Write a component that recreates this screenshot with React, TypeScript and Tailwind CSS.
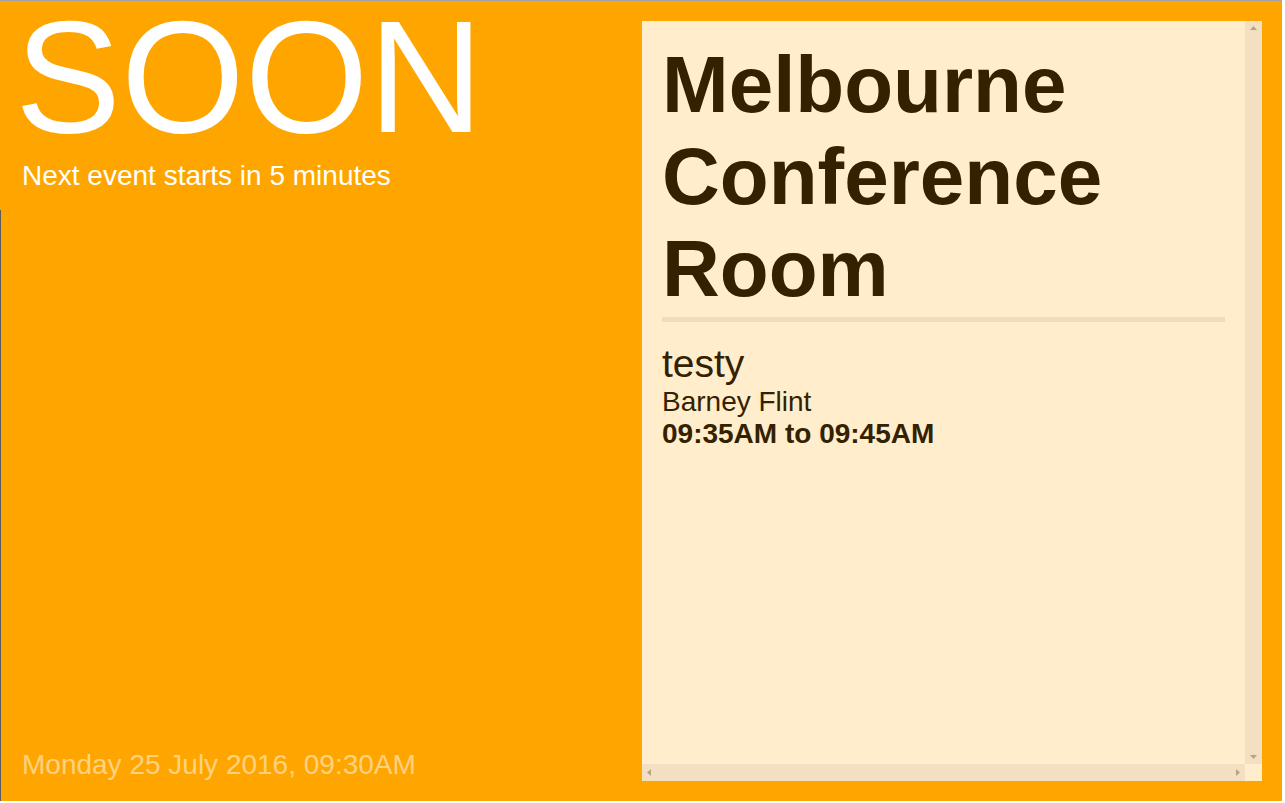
import React from "react";

const font = { fontFamily: '"Liberation Sans", Arial, sans-serif' };

export default function App() {
  return (
    <div className="w-[1285px] h-[803px] bg-white overflow-hidden" style={font}>
      <div className="relative w-[1282px] h-[801px] bg-[#ffa500] border-t border-[#a3a3a3] flex">
        <div className="absolute left-0 top-[209px] bottom-0 w-px bg-[#5b5b5b]" />
        {/* Left column */}
        <div className="w-[642px] h-full flex flex-col pl-[22px] pb-[20px]">
          <div className="text-[159px] leading-[152px] text-white -ml-[7px]">SOON</div>
          <div className="text-[28px] leading-[32px] text-white mt-[7px]">Next event starts in 5 minutes</div>
          <div className="mt-auto text-[28px] leading-[32px] text-[#ffd280]">Monday 25 July 2016, 09:30AM</div>
        </div>
        {/* Right panel */}
        <div className="mt-5 mb-5 w-[620px] h-[760px] bg-[#ffedcc] flex flex-col">
          <div className="flex flex-1 min-h-0">
            <div className="flex-1 px-5 pt-[18px] text-[#332100]">
              <h1 className="text-[80px] leading-[92px] font-bold">Melbourne Conference Room</h1>
              <div className="h-[5px] bg-[#f0dcb8] mt-[2px]" />
              <div className="mt-[20px] text-[39px] leading-[44px]">testy</div>
              <div className="text-[28px] leading-[32px]">Barney Flint</div>
              <div className="text-[28px] leading-[32px] font-bold">09:35AM to 09:45AM</div>
            </div>
            <div className="w-[17px] bg-[#f3e0c3] flex flex-col items-center justify-between py-[5px]">
              <svg width="7" height="4" viewBox="0 0 7 4"><path d="M3.5 0 L7 4 L0 4 Z" fill="#b9a482" /></svg>
              <svg width="7" height="4" viewBox="0 0 7 4"><path d="M0 0 L7 0 L3.5 4 Z" fill="#b9a482" /></svg>
            </div>
          </div>
          <div className="flex h-[17px]">
            <div className="flex-1 bg-[#f3e0c3] flex items-center justify-between px-[5px]">
              <svg width="4" height="7" viewBox="0 0 4 7"><path d="M4 0 L4 7 L0 3.5 Z" fill="#b9a482" /></svg>
              <svg width="4" height="7" viewBox="0 0 4 7"><path d="M0 0 L4 3.5 L0 7 Z" fill="#b9a482" /></svg>
            </div>
            <div className="w-[17px] bg-[#ffedcc]" />
          </div>
        </div>
      </div>
    </div>
  );
}
